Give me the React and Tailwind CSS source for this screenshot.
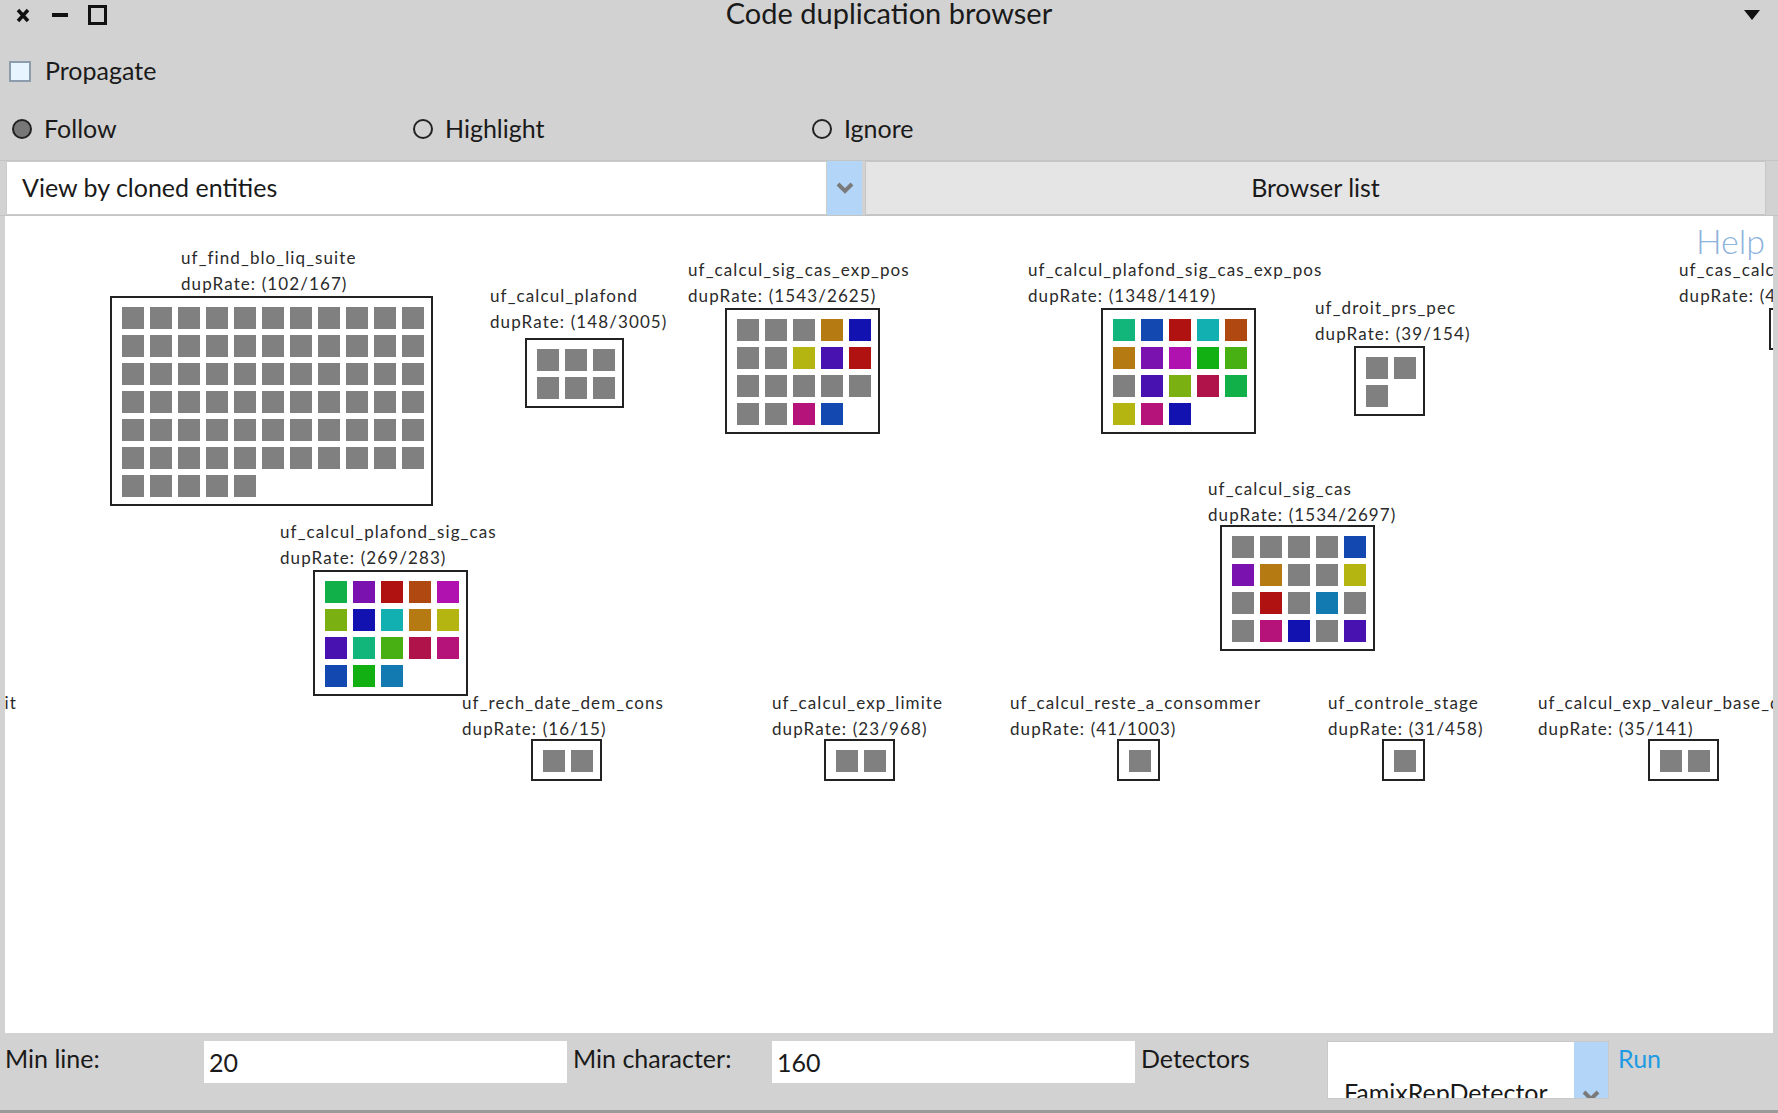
import React from 'react';

// palette used by the duplication squares
const C = {
    g: '#808080',
    och: '#b57a12',
    blu: '#1212b0',
    olv: '#b5b512',
    ind: '#4812b0',
    red: '#b01212',
    mag: '#b5127a',
    bl2: '#1248b0',
    tea: '#12b57a',
    cya: '#12b0b0',
    rus: '#b04812',
    pur: '#7a12b0',
    fuc: '#b012b0',
    grn: '#12b012',
    lim: '#48b012',
    ygr: '#7ab012',
    cri: '#b0124a',
    gr2: '#12b048',
    stl: '#127ab0',
};

const grays = (n) => Array.from({ length: n }, () => 'g');

// coordinates are page coordinates; canvas origin is (5, 216)
const nodes = [
    { name: 'uf_find_blo_liq_suite', rate: '(102/167)', lx: 181, ly: 245, bx: 110, by: 296, cols: 11, cells: grays(71) },
    { name: 'uf_calcul_plafond', rate: '(148/3005)', lx: 490, ly: 283, bx: 525, by: 338, cols: 3, cells: grays(6) },
    {
        name: 'uf_calcul_sig_cas_exp_pos', rate: '(1543/2625)', lx: 688, ly: 257, bx: 725, by: 308, cols: 5,
        cells: ['g', 'g', 'g', 'och', 'blu', 'g', 'g', 'olv', 'ind', 'red', 'g', 'g', 'g', 'g', 'g', 'g', 'g', 'mag', 'bl2'],
    },
    {
        name: 'uf_calcul_plafond_sig_cas_exp_pos', rate: '(1348/1419)', lx: 1028, ly: 257, bx: 1101, by: 308, cols: 5,
        cells: ['tea', 'bl2', 'red', 'cya', 'rus', 'och', 'pur', 'fuc', 'grn', 'lim', 'g', 'ind', 'ygr', 'cri', 'gr2', 'olv', 'mag', 'blu'],
    },
    { name: 'uf_droit_prs_pec', rate: '(39/154)', lx: 1315, ly: 295, bx: 1354, by: 346, cols: 2, cells: grays(3) },
    { name: 'uf_cas_calcul_plafond', rate: '(47/210)', lx: 1679, ly: 257, bx: 1769, by: 308, cols: 3, cells: grays(3) },
    {
        name: 'uf_calcul_sig_cas', rate: '(1534/2697)', lx: 1208, ly: 476, bx: 1220, by: 525, cols: 5,
        cells: ['g', 'g', 'g', 'g', 'bl2', 'pur', 'och', 'g', 'g', 'olv', 'g', 'red', 'g', 'stl', 'g', 'g', 'mag', 'blu', 'g', 'ind'],
    },
    {
        name: 'uf_calcul_plafond_sig_cas', rate: '(269/283)', lx: 280, ly: 519, bx: 313, by: 570, cols: 5,
        cells: ['gr2', 'pur', 'red', 'rus', 'fuc', 'ygr', 'blu', 'cya', 'och', 'olv', 'ind', 'tea', 'lim', 'cri', 'mag', 'bl2', 'grn', 'stl'],
    },
    { name: 'uf_rech_date_dem_cons', rate: '(16/15)', lx: 462, ly: 690, bx: 531, by: 739, cols: 2, cells: grays(2) },
    { name: 'uf_calcul_exp_limite', rate: '(23/968)', lx: 772, ly: 690, bx: 824, by: 739, cols: 2, cells: grays(2) },
    { name: 'uf_calcul_reste_a_consommer', rate: '(41/1003)', lx: 1010, ly: 690, bx: 1117, by: 739, cols: 1, cells: grays(1) },
    { name: 'uf_controle_stage', rate: '(31/458)', lx: 1328, ly: 690, bx: 1382, by: 739, cols: 1, cells: grays(1) },
    { name: 'uf_calcul_exp_valeur_base_droit', rate: '(35/141)', lx: 1538, ly: 690, bx: 1648, by: 739, cols: 2, cells: grays(2) },
];

function Node({ node }) {
    return (
        <>
            <div
                className="absolute whitespace-nowrap text-[17px] leading-[26px] tracking-[1.1px] text-[#2a2a2a]"
                style={{ left: node.lx - 5, top: node.ly - 216 }}
            >
                <div>{node.name}</div>
                <div>dupRate: {node.rate}</div>
            </div>
            <div
                className="absolute border-2 border-[#222] bg-white pt-[9px] pl-[10px] pr-[7px] pb-[7px]"
                style={{ left: node.bx - 5, top: node.by - 216 }}
            >
                <div className="grid gap-[6px]" style={{ gridTemplateColumns: `repeat(${node.cols}, 22px)` }}>
                    {node.cells.map((c, i) => (
                        <div key={i} className="h-[22px] w-[22px]" style={{ backgroundColor: C[c] }} />
                    ))}
                </div>
            </div>
        </>
    );
}

function Radio({ label, checked }) {
    return (
        <div className="flex items-center gap-[12px]">
            <span
                className={`h-[20px] w-[20px] rounded-full border-2 border-[#222] ${checked ? 'bg-[#777]' : 'bg-transparent'}`}
            />
            <span>{label}</span>
        </div>
    );
}

function Chevron() {
    return (
        <svg width="18" height="12" viewBox="0 0 18 12">
            <path d="M2 2 L9 9 L16 2" fill="none" stroke="#7a7a7a" strokeWidth="4" />
        </svg>
    );
}

export default function App() {
    return (
        <div className="flex h-[1113px] w-[1778px] flex-col overflow-hidden bg-[#d2d2d2] font-['Lato',sans-serif] text-[25px] text-[#1a1a1a]">
            {/* Title bar */}
            <div className="flex h-[30px] shrink-0 items-center">
                <div className="flex w-[120px] items-center">
                    <svg className="ml-[16px]" width="14" height="15" viewBox="0 0 14 15">
                        <path d="M2 2 L12 13 M12 2 L2 13" stroke="#111" strokeWidth="3.5" />
                    </svg>
                    <div className="ml-[22px] h-[4px] w-[16px] bg-[#111]" />
                    <div className="ml-[20px] h-[20px] w-[19px] border-[3.5px] border-[#111]" />
                </div>
                <div className="flex-1 pb-[4px] text-center text-[29px] leading-[26px]">Code duplication browser</div>
                <div className="flex w-[120px] justify-end pr-[18px]">
                    <svg width="16" height="10" viewBox="0 0 16 10">
                        <path d="M0 0 H16 L8 10 Z" fill="#111" />
                    </svg>
                </div>
            </div>

            {/* Propagate */}
            <div className="mt-[21px] flex h-[40px] shrink-0 items-center gap-[14px] pl-[9px]">
                <span className="h-[21px] w-[22px] border-2 border-[#8c9cad] bg-[#e8f4ff]" />
                <span>Propagate</span>
            </div>

            {/* Mode radios */}
            <div className="mt-[18px] flex h-[40px] shrink-0 items-center pl-[12px]">
                <div className="w-[401px]">
                    <Radio label="Follow" checked />
                </div>
                <div className="w-[399px]">
                    <Radio label="Highlight" />
                </div>
                <Radio label="Ignore" />
            </div>

            {/* View selector + browser list */}
            <div className="mt-[11px] flex h-[56px] shrink-0 items-stretch border-y border-[#c4c4c4] pl-[6px] pr-[12px]">
                <div className="flex w-[821px] items-center border border-[#cdcdcd] bg-white pl-[15px]">
                    View by cloned entities
                </div>
                <div className="flex w-[35px] items-center justify-center bg-[#b3d5f8]">
                    <Chevron />
                </div>
                <div className="ml-[3px] flex flex-1 items-center justify-center border border-[#c6c6c6] bg-[#e5e5e5]">
                    Browser list
                </div>
            </div>

            {/* Canvas */}
            <div className="relative mx-[5px] flex-1 overflow-hidden bg-white">
                {nodes.map((n) => (
                    <Node key={n.name} node={n} />
                ))}
                <div
                    className="absolute whitespace-nowrap text-[17px] leading-[26px] tracking-[1.1px] text-[#2a2a2a]"
                    style={{ right: 1768 - 12, top: 690 - 216 }}
                >
                    <div>uf_calcul_montant_droit</div>
                </div>
                <div className="absolute right-[8px] top-[8px] text-[34px] font-light leading-none text-[#8db3dc]">Help</div>
            </div>

            {/* Bottom bar */}
            <div className="flex h-[80px] shrink-0 items-start border-b-[3px] border-[#9a9a9a] pl-[5px] pt-[8px]">
                <div className="flex h-[42px] w-[199px] items-center pb-[6px]">Min line:</div>
                <div className="flex h-[42px] w-[363px] items-center bg-white pl-[5px] pt-[2px]">20</div>
                <div className="ml-[6px] flex h-[42px] w-[199px] items-center pb-[6px]">Min character:</div>
                <div className="flex h-[42px] w-[363px] items-center bg-white pl-[5px] pt-[2px]">160</div>
                <div className="ml-[6px] flex h-[42px] w-[186px] items-center pb-[6px]">Detectors</div>
                <div className="flex h-[58px] items-stretch border border-[#c8c8c8]">
                    <div className="relative w-[246px] overflow-hidden bg-white">
                        <div className="absolute left-[16px] top-[38px] leading-none">FamixRepDetector</div>
                    </div>
                    <div className="flex w-[34px] items-end justify-center overflow-hidden bg-[#b3d5f8]">
                        <div className="mb-[-4px]">
                            <Chevron />
                        </div>
                    </div>
                </div>
                <div className="ml-[9px] flex h-[42px] items-center pb-[6px] text-[#1e9be3]">Run</div>
            </div>
        </div>
    );
}
